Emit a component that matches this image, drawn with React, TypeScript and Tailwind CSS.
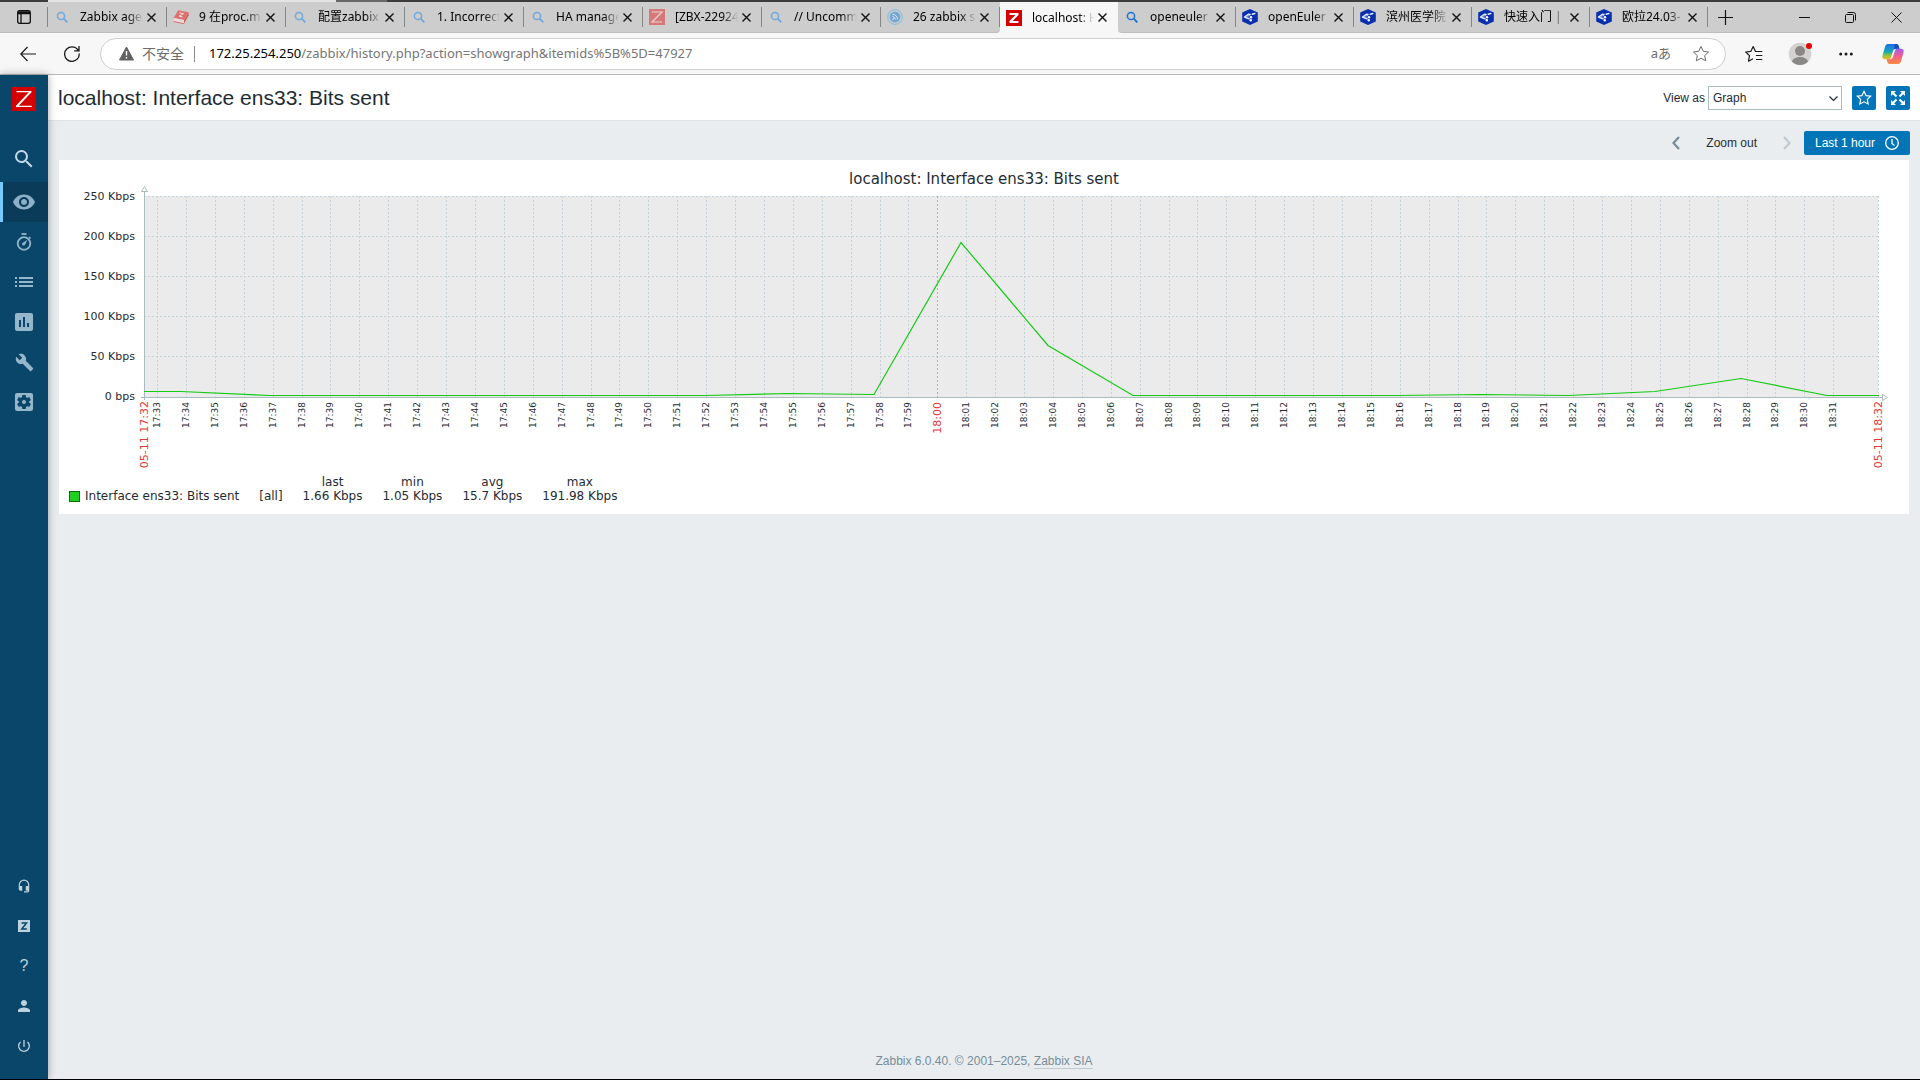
import React from "react";
import {
  MdSearch,
  MdVisibility,
  MdList,
  MdAssessment,
  MdBuild,
  MdSettingsApplications,
  MdHeadsetMic,
  MdPerson,
  MdPowerSettingsNew,
} from "react-icons/md";

type TabIcon = "search" | "searchBright" | "book" | "zbx" | "rss" | "zabbix" | "euler";

const leftTabs: { title: string; icon: TabIcon }[] = [
  { title: "Zabbix age", icon: "search" },
  { title: "9 在proc.m", icon: "book" },
  { title: "配置zabbix", icon: "search" },
  { title: "1. Incorrect", icon: "search" },
  { title: "HA manage", icon: "search" },
  { title: "[ZBX-22924", icon: "zbx" },
  { title: "// Uncomm", icon: "search" },
  { title: "26 zabbix s", icon: "rss" },
];

const rightTabs: { title: string; icon: TabIcon }[] = [
  { title: "openeuler", icon: "searchBright" },
  { title: "openEuler", icon: "euler" },
  { title: "滨州医学院", icon: "euler" },
  { title: "快速入门 |", icon: "euler" },
  { title: "欧拉24.03-", icon: "euler" },
];

function Favicon({ kind }: { kind: TabIcon }) {
  if (kind === "search" || kind === "searchBright") {
    const color = kind === "search" ? "#6fa8dc" : "#1473cf";
    return (
      <svg className="size-4 shrink-0" viewBox="0 0 16 16" fill="none" stroke={color}>
        <circle cx="7" cy="7" r="3.6" strokeWidth="1.5" />
        <path d="M9.7 9.7l3.6 3.6" strokeWidth="1.8" />
      </svg>
    );
  }
  if (kind === "book") {
    return (
      <svg className="size-4 shrink-0" viewBox="0 0 16 16">
        <path d="M5.2 1.2L15.6 3.2 11 11 0.6 9z" fill="#dd7070" />
        <path d="M0.6 9L11 11v3.8L1 12.4z" fill="#eedada" />
        <path d="M11 11l4.6-7.8v3.4L11 14.8z" fill="#d05c5c" />
        <path d="M0.6 12l10.4 2.2v1L0.8 13z" fill="#d86a6a" />
        <path d="M6.4 3.8l4.2.8-4.6 2.6 3.8.8" fill="none" stroke="#f2dcdc" />
      </svg>
    );
  }
  if (kind === "zbx") {
    return (
      <svg className="size-4 shrink-0" viewBox="0 0 16 16">
        <path d="M0 0h16v16H0z" fill="#d67878" />
        <path d="M3 3h10L3 13h10" fill="none" stroke="#ecd5d5" strokeWidth="1.2" />
      </svg>
    );
  }
  if (kind === "rss") {
    return (
      <svg className="size-4 shrink-0" viewBox="0 0 16 16" fill="none">
        <circle cx="8" cy="8" r="7.3" stroke="#8cc0da" strokeWidth="1.2" />
        <circle cx="8" cy="8" r="5.4" fill="#76a5d4" />
        <path d="M5.6 5.4a5 5 0 015 5M5.6 7.7a2.7 2.7 0 012.7 2.7" stroke="#dce6ee" />
        <circle cx="6.2" cy="10" r=".8" fill="#dce6ee" />
      </svg>
    );
  }
  if (kind === "zabbix") {
    return (
      <svg className="size-4 shrink-0" viewBox="0 0 16 16">
        <path d="M0 0h16v16H0z" fill="#d40000" />
        <path d="M3.5 3h9v2l-5.8 6h5.8v2h-9v-2l5.8-6H3.5z" fill="#fff" />
      </svg>
    );
  }
  return (
    <svg className="size-4 shrink-0" viewBox="0 0 16 16">
      <path d="M8 0l7.8 3.600v8.800L8 16 .2 12.400V3.600z" fill="#0a2fac" />
      <path
        d="M2.500 8L6.500 5.300 8 5.600M3 8.300l4 1.400M10.200 5.200l2.600-.6"
        fill="none"
        stroke="#e4ebff"
        strokeWidth="1.500"
        strokeLinecap="round"
      />
      <path d="M4.500 7.300l3.500-.6" fill="none" stroke="#a9bcf2" />
      <circle cx="9" cy="8.300" r="1.200" fill="#fff" />
      <circle cx="8.800" cy="11.300" r="1.200" fill="#fff" />
    </svg>
  );
}

function Tab({ title, icon, active = false }: { title: string; icon: TabIcon; active?: boolean }) {
  return (
    <div
      className={
        active
          ? "flex h-full w-[118px] shrink-0 items-center pr-2 pl-1.5"
          : "flex min-w-0 flex-1 items-center pl-1.5"
      }
    >
      <Favicon kind={icon} />
      <span className="ml-2.5 min-w-0 flex-1 overflow-hidden mask-r-from-75% mask-r-to-100% whitespace-nowrap">
        {title}
      </span>
      <button type="button" aria-label={`Close ${title}`} className="grid size-4 shrink-0 place-items-center">
        <svg className="size-[9px]" viewBox="0 0 9 9" stroke="#111" strokeWidth="1.400">
          <path d="M.5.5l8 8M8.500.5l-8 8" />
        </svg>
      </button>
      {!active && <span className="ml-[7px] h-5 w-px bg-[#868686]" />}
    </div>
  );
}

function WindowTabs() {
  return (
    <div className="flex h-[31px] bg-[#f7f7f7] text-[12px]">
      <div className="flex w-[1000px] items-center rounded-br-sm border-b border-[#bdbdbd] bg-[#cdcdcd]">
        <div className="flex w-12 shrink-0 items-center justify-between">
          <button type="button" aria-label="Tab actions" className="ml-4">
            <svg className="size-4" viewBox="0 0 16 16" fill="none" stroke="#111" strokeWidth="1.300">
              <rect x="1.700" y="1.700" width="12.600" height="12.600" rx="2" />
              <path d="M2 3h12M2 4.500h12M5 4.500v9.500" />
            </svg>
          </button>
          <span className="h-5 w-px bg-[#868686]" />
        </div>
        {leftTabs.map((t) => (
          <Tab key={t.title} {...t} />
        ))}
      </div>
      <Tab title="localhost: H" icon="zabbix" active />
      <div className="flex flex-1 items-center rounded-bl-sm border-b border-[#bdbdbd] bg-[#cdcdcd]">
        <div className="flex w-[590px]">
          {rightTabs.map((t) => (
            <Tab key={t.title} {...t} />
          ))}
        </div>
        <button type="button" aria-label="New tab" className="ml-[10px]">
          <svg className="size-[15px]" viewBox="0 0 15 15" stroke="#111" strokeWidth="1.200">
            <path d="M7.500 0v15M0 7.500h15" />
          </svg>
        </button>
        <div className="mr-[18px] ml-auto flex items-center gap-[35px]">
          <button type="button" aria-label="Minimize">
            <svg className="size-[11px]" viewBox="0 0 11 11" stroke="#111">
              <path d="M0 5.500h11" />
            </svg>
          </button>
          <button type="button" aria-label="Restore">
            <svg className="size-[11px]" viewBox="0 0 11 11" fill="none" stroke="#111">
              <rect x=".5" y="2.500" width="8" height="8" rx="1" />
              <path d="M2.500.5h6a2 2 0 012 2v6" />
            </svg>
          </button>
          <button type="button" aria-label="Close">
            <svg className="size-[11px]" viewBox="0 0 11 11" stroke="#111">
              <path d="M.5.5l10 10M10.500.5l-10 10" />
            </svg>
          </button>
        </div>
      </div>
    </div>
  );
}

const starPath = "M9 1.500l2.300 4.800 5.200.7-3.800 3.600 1 5.200L9 13.300l-4.700 2.500 1-5.200L1.500 7l5.200-.7z";

function AddressBar() {
  return (
    <div className="flex h-[42px] items-center border-b border-[#b9b9b9] bg-[#f7f7f7]">
      <button type="button" aria-label="Back" className="ml-5">
        <svg className="size-4" viewBox="0 0 16 16" fill="none" stroke="#1b1b1b" strokeWidth="1.200">
          <path d="M16 8H.8M7.500 1L.8 8l6.700 7" />
        </svg>
      </button>
      <button type="button" aria-label="Refresh" className="ml-7">
        <svg className="size-4" viewBox="0 0 16 16" fill="none" stroke="#1b1b1b" strokeWidth="1.300">
          <path d="M15.200 7.500A7.300 7.300 0 118 .8c2.700 0 4.900 1.300 6.600 3.700M15 0v4.800h-4.800" />
        </svg>
      </button>
      <div className="ml-5 flex h-8 flex-1 items-center rounded-full border border-[#cfcfcf] bg-white">
        <svg className="ml-[18px] size-[15px]" viewBox="0 0 15 15">
          <path d="M7.500 1L14.500 14H.5z" fill="#616161" stroke="#616161" strokeLinejoin="round" />
          <path d="M6.800 5h1.400v4.500H6.800zM6.800 11h1.400v1.500H6.800z" fill="#fff" />
        </svg>
        <span className="ml-2 text-[14px] text-[#6b6b6b]">不安全</span>
        <span className="ml-[10px] h-4 w-px bg-[#8c8c8c]" />
        <span className="ml-[14px] text-[13px] text-[#767676]">
          <span className="text-black">172.25.254.250</span>/zabbix/history.php?action=showgraph&amp;itemids%5B%5D=47927
        </span>
        <button type="button" aria-label="Translate" className="ml-auto text-[13px] text-[#6b6b6b]">
          aあ
        </button>
        <button type="button" aria-label="Add to favorites" className="mr-[15px] ml-[21px]">
          <svg className="size-[18px]" viewBox="0 0 18 18" fill="none" stroke="#6b6b6b" strokeLinejoin="round">
            <path d={starPath} />
          </svg>
        </button>
      </div>
      <button type="button" aria-label="Favorites" className="ml-[19px]">
        <svg className="size-[18px]" viewBox="0 0 18 18" fill="none" stroke="#1b1b1b" strokeWidth="1.200" strokeLinejoin="round">
          <path d="M10.500 6.500L8.200 1.500 5.900 6.300.7 7l3.800 3.600-1 5.600 4.500-2.400M8.200 1.500l2.300 5h6.800M11 10.500h6.300M11 14.500h6.300" />
        </svg>
      </button>
      <button type="button" aria-label="Profile" className="ml-[25px]">
        <svg className="size-6" viewBox="0 0 24 24">
          <circle cx="12" cy="12" r="11.300" fill="#d4d2d0" />
          <circle cx="12" cy="9" r="5" fill="#8a8886" />
          <path d="M4 19.500c1.500-6 14.500-6 16 0-4 4.500-12 4.500-16 0z" fill="#8a8886" />
          <circle cx="21" cy="4" r="3" fill="#e60000" />
        </svg>
      </button>
      <button type="button" aria-label="Settings and more" className="ml-[27px]">
        <svg className="size-[14px]" viewBox="0 0 14 14" fill="#1b1b1b">
          <circle cx="1.700" cy="7" r="1.500" />
          <circle cx="7" cy="7" r="1.500" />
          <circle cx="12.300" cy="7" r="1.500" />
        </svg>
      </button>
      <button type="button" aria-label="Copilot" className="mr-4 ml-[29px]">
        <svg className="size-[22px]" viewBox="0 0 22 22">
          <defs>
            <linearGradient id="copA" x1="0" y1="0" x2="0" y2="1">
              <stop offset="0" stopColor="#1d6fe8" />
              <stop offset=".5" stopColor="#18a6b8" />
              <stop offset=".75" stopColor="#8cc63f" />
              <stop offset="1" stopColor="#f2b71c" />
            </linearGradient>
            <linearGradient id="copB" x1="0" y1="0" x2="0" y2="1">
              <stop offset="0" stopColor="#a45cf0" />
              <stop offset=".5" stopColor="#f0628c" />
              <stop offset="1" stopColor="#fb8b3c" />
            </linearGradient>
          </defs>
          <path d="M6 1h8.500c1.200 0 1.800 1 2.200 2.200l.8 2.600h-3.700c-1.500 0-2.300 1-2.700 2.200l-2 6.200c-.4 1.400-1.200 2-2.500 2H3c-2.300 0-3-1.700-2.500-3.700L3 3.800C3.500 2 4.500 1 6 1z" fill="url(#copA)" />
          <path d="M16 21H7.500c-1.200 0-1.800-1-2.200-2.200l-.8-2.600h3.700c1.500 0 2.300-1 2.700-2.200l2-6.200c.4-1.400 1.200-2 2.500-2H19c2.300 0 3 1.700 2.500 3.700L19 18.200c-.5 1.800-1.500 2.800-3 2.800z" fill="url(#copB)" />
          <path d="M12.800 1h1.700c1.200 0 1.800 1 2.200 2.200l.8 2.600h-3.700c-1 0-1.600.4-2 1z" fill="#1b48c4" />
        </svg>
      </button>
    </div>
  );
}

function TimerIcon() {
  return (
    <svg className="size-[18px]" viewBox="0 0 18 18" fill="none" stroke="currentColor">
      <circle cx="9" cy="10.500" r="6.300" strokeWidth="1.800" />
      <path d="M6.500 1h5" strokeWidth="1.800" />
      <path d="M14 4l1.500 1.500" strokeWidth="1.600" />
      <path d="M12.500 6.800L9.800 12a1.500 1.500 0 01-2.300-2z" fill="currentColor" stroke="none" />
    </svg>
  );
}

const topNav = [
  { label: "Monitoring", icon: <MdVisibility size={24} />, active: true },
  { label: "Services", icon: <TimerIcon />, active: false },
  { label: "Inventory", icon: <MdList size={24} />, active: false },
  { label: "Reports", icon: <MdAssessment size={24} />, active: false },
  { label: "Configuration", icon: <MdBuild size={19} />, active: false },
  { label: "Administration", icon: <MdSettingsApplications size={24} />, active: false },
];

const bottomNav = [
  { label: "Support", icon: <MdHeadsetMic size={14} /> },
  {
    label: "Share",
    icon: (
      <svg className="size-3" viewBox="0 0 12 12">
        <path d="M0 0h12v12H0z" fill="currentColor" />
        <path d="M3.500 3h5L3.800 9h5" fill="none" stroke="#0a466a" strokeWidth="1.500" />
      </svg>
    ),
  },
  { label: "Help", icon: <span className="text-[16px] leading-4">?</span> },
  { label: "User settings", icon: <MdPerson size={18} /> },
  { label: "Sign out", icon: <MdPowerSettingsNew size={16} /> },
];

function Sidebar() {
  return (
    <aside className="z-10 flex w-12 shrink-0 flex-col bg-[#0a466a] shadow-[0_0_8px_rgba(0,0,0,0.35)]">
      <a href="#dashboard" aria-label="Zabbix" className="mt-3 ml-3 block size-6">
        <svg viewBox="0 0 24 24">
          <path d="M0 0h24v24H0z" fill="#d40000" />
          <path d="M4.500 4h15v1.200L6.700 18.800h13V20H4v-1.200L16.800 5.200H4.500z" fill="#fff" />
        </svg>
      </a>
      <button type="button" aria-label="Search" className="mt-7 grid h-10 place-items-center text-[#c3d8e6]">
        <MdSearch size={24} />
      </button>
      <nav className="mt-[3px] flex flex-col">
        {topNav.map((n) => (
          <a
            key={n.label}
            href="#menu"
            aria-label={n.label}
            className={
              n.active
                ? "grid h-10 place-items-center border-l-3 border-[#78cafe] bg-[#0a3b59] pr-[3px] text-[#8db0c8]"
                : "grid h-10 place-items-center text-[#96b6cb]"
            }
          >
            {n.icon}
          </a>
        ))}
      </nav>
      <nav className="mt-auto mb-[13px] flex flex-col">
        {bottomNav.map((n) => (
          <a key={n.label} href="#menu" aria-label={n.label} className="grid h-10 place-items-center text-[#bdd2df]">
            {n.icon}
          </a>
        ))}
      </nav>
    </aside>
  );
}

const LEFT = 85;
const RIGHT = 1819;
const BASE = 236;
const yTicks = ["0 bps", "50 Kbps", "100 Kbps", "150 Kbps", "200 Kbps", "250 Kbps"];
const minutes = Array.from({ length: 59 }, (_, i) => {
  const m = 33 + i;
  return {
    x: Math.floor(LEFT + 13.5 + 28.9 * i) + 0.5,
    label: m < 60 ? `17:${m}` : `18:${String(m - 60).padStart(2, "0")}`,
    hour: m === 60,
  };
});
const series: [number, number][] = [
  [85, 231.5], [122, 231.5], [210, 235.5], [646, 235.5], [729, 233.5], [815, 234.5],
  [902, 82.5], [989, 185.5], [1074, 235.5], [1336, 235.5], [1423, 234.5], [1509, 235.5],
  [1596, 231.5], [1682, 218.5], [1768, 235.5], [1820, 235.5],
];

function Graph() {
  return (
    <svg className="w-full" viewBox="0 0 1850 315" fontFamily="'DejaVu Sans', sans-serif" fill="#1f2c33">
      <text x="925" y="24" fontSize="15" textAnchor="middle">
        localhost: Interface ens33: Bits sent
      </text>
      <rect x={LEFT} y="36" width={RIGHT - LEFT} height="201" fill="#ebebeb" />
      <g stroke="#c5d2d9" strokeDasharray="2 2">
        {yTicks.slice(1).map((t, i) => (
          <path key={t} d={`M${LEFT} ${BASE - 39.5 - 40 * i}H${RIGHT + 1}`} />
        ))}
        {minutes.map((m) => (
          <path key={m.label} d={`M${m.x} 36V237`} stroke={m.hour ? "#a5b1b6" : undefined} />
        ))}
        <path d={`M${RIGHT + 0.5} 36V237`} />
      </g>
      <g stroke="#acbbc2" fill="none">
        <path d="M85.5 32V240M82 237.5H1824" />
        <path d="M82.500 31.500h6l-3-5zM1823.500 234.500v6l5-3z" fill="#fff" />
      </g>
      <polyline points={series.map((p) => p.join(",")).join(" ")} fill="none" stroke="#12cb12" strokeWidth="1.200" />
      <g fontSize="11" textAnchor="end">
        {yTicks.map((t, i) => (
          <text key={t} x="76" y={BASE + 4 - 40 * i}>
            {t}
          </text>
        ))}
      </g>
      <g fontSize="9" textAnchor="end">
        {minutes.map((m) => (
          <text
            key={m.label}
            transform={`translate(${m.x + (m.hour ? 3.5 : 2.5)} 242) rotate(-90)`}
            fontSize={m.hour ? 11 : 9}
            fill={m.hour ? "#e33734" : undefined}
          >
            {m.label}
          </text>
        ))}
      </g>
      <g fontSize="11" textAnchor="end" fill="#e33734">
        <text transform="translate(89 241) rotate(-90)">05-11 17:32</text>
        <text transform="translate(1823 241) rotate(-90)">05-11 18:32</text>
      </g>
    </svg>
  );
}

const stats = [
  { name: "last", value: "1.66 Kbps" },
  { name: "min", value: "1.05 Kbps" },
  { name: "avg", value: "15.7 Kbps" },
  { name: "max", value: "191.98 Kbps" },
];

function Legend() {
  return (
    <table className="mb-[11px] ml-[10px] font-['DejaVu_Sans',sans-serif] text-[12px] leading-[14px]">
      <thead>
        <tr>
          <td />
          <td />
          {stats.map((s) => (
            <th key={s.name} scope="col" className="pl-5 font-normal">
              {s.name}
            </th>
          ))}
        </tr>
      </thead>
      <tbody>
        <tr>
          <td>
            <span className="flex items-center gap-[5px]">
              <span className="size-[11px] border border-[#0b6b0b] bg-[#1fd01f]" />
              Interface ens33: Bits sent
            </span>
          </td>
          <td className="pl-5">[all]</td>
          {stats.map((s) => (
            <td key={s.name} className="pl-5">
              {s.value}
            </td>
          ))}
        </tr>
      </tbody>
    </table>
  );
}

function Chevron({ d, className }: { d: string; className: string }) {
  return (
    <svg className={className} viewBox="0 0 8 14" fill="none" stroke="currentColor" strokeWidth="2.200">
      <path d={d} />
    </svg>
  );
}

export default function App() {
  return (
    <div className="flex min-h-screen flex-col bg-[#e9edf0] font-['Noto_Sans','Noto_Sans_CJK_SC',sans-serif] text-black">
      <div className="flex h-0.5 bg-[#3e3c3b]">
        <span className="ml-12 w-72 bg-[#e4e4e4]" />
        <span className="w-[51px] bg-[#6a6867]" />
      </div>
      <WindowTabs />
      <AddressBar />
      <div className="flex flex-1 border-b border-black font-['Liberation_Sans',Arial,sans-serif] text-[12px] text-[#1f2c33]">
        <Sidebar />
        <main className="flex min-w-0 flex-1 flex-col">
          <header className="flex h-[46px] items-center border-b border-[#dfe4e7] bg-white px-[10px]">
            <h1 className="text-[21px]">localhost: Interface ens33: Bits sent</h1>
            <label htmlFor="view-as" className="ml-auto">
              View as
            </label>
            <span className="relative ml-[3px]">
              <select
                id="view-as"
                defaultValue="Graph"
                className="h-6 w-[134px] appearance-none border border-[#acbbc2] bg-white pl-1"
              >
                <option>Graph</option>
                <option>Values</option>
                <option>500 latest values</option>
              </select>
              <svg className="pointer-events-none absolute top-[9px] right-1 size-[9px]" viewBox="0 0 9 9" fill="none" stroke="#1f2c33" strokeWidth="1.200">
                <path d="M.5 1.500l4 4 4-4" />
              </svg>
            </span>
            <button type="button" aria-label="Add to favourites" className="ml-[10px] grid size-6 place-items-center rounded-xs bg-[#0275b8]">
              <svg className="size-4" viewBox="0 0 18 18" fill="none" stroke="#fff" strokeWidth="1.300">
                <path d={starPath} />
              </svg>
            </button>
            <button type="button" aria-label="Kiosk mode" className="ml-[10px] grid size-6 place-items-center rounded-xs bg-[#0275b8]">
              <svg className="size-[14px]" viewBox="0 0 14 14" fill="#fff" stroke="#fff">
                <path d="M0 0h5L0 5zM14 0v5L9 0zM0 14V9l5 5zM14 14H9l5-5z" stroke="none" />
                <path d="M1.500 1.500l4 4M12.500 1.500l-4 4M1.500 12.500l4-4M12.500 12.500l-4-4" strokeWidth="2" />
              </svg>
            </button>
          </header>
          <div className="mt-[10px] mr-[10px] flex items-center justify-end">
            <button type="button" aria-label="Previous period" className="text-[#768d99]">
              <Chevron d="M7 1L1.500 7 7 13" className="h-[14px] w-2" />
            </button>
            <button type="button" className="ml-[26px]">
              Zoom out
            </button>
            <button type="button" disabled aria-label="Next period" className="ml-[26px] text-[#c0cbd1]">
              <Chevron d="M1 1l5.500 6L1 13" className="h-[14px] w-2" />
            </button>
            <button type="button" className="ml-[13px] flex h-6 w-[106px] items-center justify-between rounded-xs bg-[#0275b8] px-[11px] text-white">
              <span className="whitespace-nowrap">Last 1 hour</span>
              <svg className="size-[14px]" viewBox="0 0 14 14" fill="none" stroke="#fff" strokeWidth="1.300">
                <circle cx="7" cy="7" r="6.300" />
                <path d="M7 3v4.500l2.500 2" />
              </svg>
            </button>
          </div>
          <section className="mx-[11px] mt-[5px] bg-white">
            <Graph />
            <Legend />
          </section>
          <footer className="mt-auto mb-[9px] text-center text-[#768d99]">
            Zabbix 6.0.40. © 2001–2025,{" "}
            <a href="#zabbix" className="border-b border-[#c0cbd1]">
              Zabbix SIA
            </a>
          </footer>
        </main>
      </div>
    </div>
  );
}
